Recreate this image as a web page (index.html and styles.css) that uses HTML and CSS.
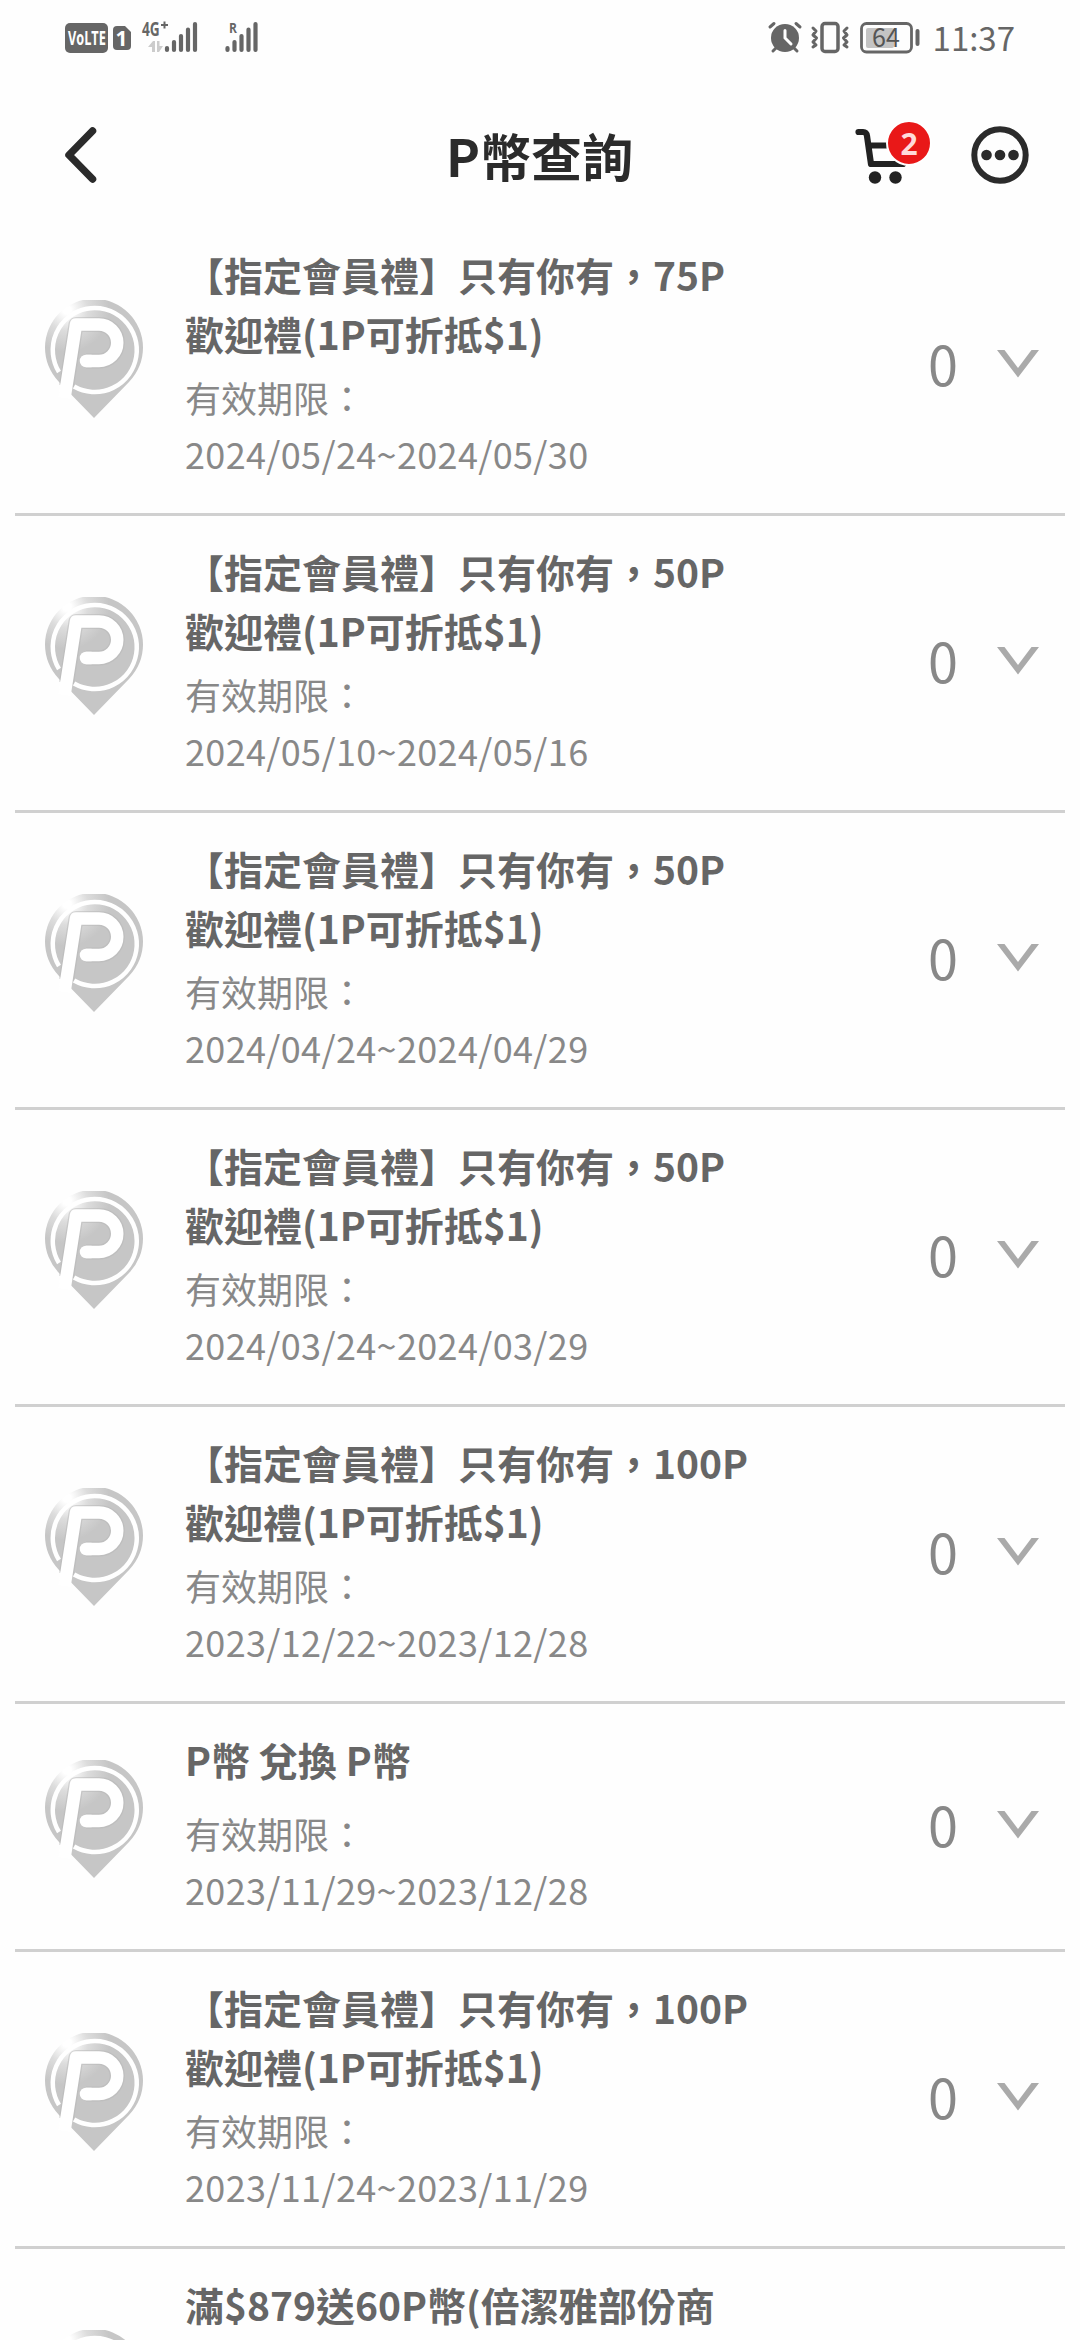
FILE: index.html
```html
<!DOCTYPE html>
<html lang="zh-Hant">
<head>
    <meta charset="UTF-8">
    <meta name="viewport" content="width=device-width, initial-scale=1.0">
    <title>P幣查詢</title>
    <link rel="stylesheet" href="styles.css">
</head>
<body>
    <!-- shared icons -->
    <svg class="sprite" width="0" height="0">
        <defs>
            <radialGradient id="pin-fill" gradientUnits="userSpaceOnUse" cx="22" cy="10" r="42">
                <stop offset="0.1" stop-color="#fff"/>
                <stop offset="0.5" stop-color="#dcdcdc"/>
                <stop offset="1" stop-color="#c6c6c6"/>
            </radialGradient>
        </defs>
        <symbol id="icon-pin" viewBox="0 0 100 119">
            <path d="M49 118 L14 82 A49 49 0 1 1 84 82 Z" fill="url(#pin-fill)"/>
            <path d="M14 72 A42 42 0 1 1 29 86.500" fill="none" stroke="#fff" stroke-width="4.500"/>
            <g fill="none" stroke-linejoin="round">
                <path d="M21.500 86 L31 24.500 H54 A18 18 0 0 1 54 61 H41" stroke="#b6b6b6" stroke-width="15" opacity="0.5"/>
                <path d="M19.500 98 L31 24.500 H54 A18 18 0 0 1 54 61 H41" stroke="#fff" stroke-width="12.500"/>
                <path d="M46 61 H41" stroke="#fff" stroke-width="12.500" stroke-linecap="round"/>
            </g>
        </symbol>
        <symbol id="icon-down" viewBox="0 0 42 28">
            <path d="M0 0 H7.500 L21 18 L34.500 0 H42 L21 27.500 Z" fill="#aaa"/>
        </symbol>
    </svg>

    <div class="status-bar">
        <div class="status-left">
            <svg width="43" height="30" viewBox="0 0 43 30">
                <rect width="43" height="30" rx="5" fill="#666"/>
                <text transform="translate(3 22) scale(0.67 1)" class="volte-text">VoLTE</text>
            </svg>
            <svg class="sim" width="18" height="24" viewBox="0 0 18 24">
                <path d="M4 0 H12 L18 6 V20 Q18 24 14 24 H4 Q0 24 0 20 V4 Q0 0 4 0 Z" fill="#666"/>
                <text x="8.500" y="19.500" text-anchor="middle" class="sim-text">1</text>
            </svg>
            <svg class="signal" width="56" height="32" viewBox="0 0 56 32">
                <text transform="translate(0 13.500) scale(0.72 1)" class="net-text">4G</text>
                <path d="M19 3 H26 M22.500 -0.500 V6.500" stroke="#666" stroke-width="2"/>
                <path d="M6 25 L11 19 H13 V30 H10 V25 Z M15 19 H17.500 V24 H21 L17 30 H15 Z" fill="#ccc"/>
                <path d="M25 26 V28 M32 20 V28 M39 14 V28 M46 7.500 V28 M53 2 V28" stroke="#666" stroke-width="4.200" stroke-linecap="round"/>
            </svg>
            <svg class="signal-roam" width="34" height="32" viewBox="0 0 34 32">
                <text transform="translate(4 11) scale(0.8 1)" class="roam-text">R</text>
                <path d="M2.500 26 V28 M9.500 20 V28 M16.500 14 V28 M23.500 7.500 V28 M30.500 2 V28" stroke="#666" stroke-width="4.200" stroke-linecap="round"/>
            </svg>
        </div>
        <div class="status-right">
            <svg width="34" height="32" viewBox="0 0 34 32">
                <circle cx="17" cy="16" r="14" fill="#666"/>
                <path d="M2 5 L6 1.500 M28 1.500 L32 5 M5 29 L9 25 M25 25 L29 29" stroke="#666" stroke-width="3" stroke-linecap="round"/>
                <path d="M17 8.500 V16 L23 22" fill="none" stroke="#fff" stroke-width="3" stroke-linecap="round"/>
            </svg>
            <svg class="vibrate" width="38" height="32" viewBox="0 0 38 32">
                <rect x="11" y="1.500" width="16" height="28" rx="3" fill="none" stroke="#666" stroke-width="3.500"/>
                <path d="M2 6 L5 9 L2 13 L5.500 16 L2 20 L5 23 L2 25 M36 6 L33 9 L36 13 L32.500 16 L36 20 L33 23 L36 25" fill="none" stroke="#666" stroke-width="3" stroke-linecap="round" stroke-linejoin="round"/>
            </svg>
            <svg class="battery" width="60" height="32" viewBox="0 0 60 32">
                <rect x="1.500" y="1.500" width="50" height="28.500" rx="5" fill="none" stroke="#666" stroke-width="2.800"/>
                <rect x="6" y="6" width="28" height="20" rx="2" fill="#c4c4c4"/>
                <text x="26" y="25" text-anchor="middle" class="battery-text">64</text>
                <path d="M57.500 9 V22" stroke="#666" stroke-width="4" stroke-linecap="round"/>
            </svg>
            <span class="clock">11:37</span>
        </div>
    </div>

    <div class="header">
        <div class="header-left">
            <svg width="32" height="56" viewBox="0 0 32 56">
                <path d="M27.500 4 L4 28 L27.500 52" fill="none" stroke="#2b2b2b" stroke-width="7.500" stroke-linecap="round" stroke-linejoin="round"/>
            </svg>
        </div>
        <h1>P幣查詢</h1>
        <div class="header-right">
            <div class="cart">
                <svg width="76" height="58" viewBox="0 0 76 58">
                    <path d="M3.500 6 H8 Q11.500 6 12 10 L16 38 H48 M14 19.500 H44" fill="none" stroke="#222" stroke-width="6.200" stroke-linecap="round" stroke-linejoin="round"/>
                    <circle cx="20" cy="51.500" r="6.200" fill="#222"/>
                    <circle cx="40.500" cy="51.500" r="6.200" fill="#222"/>
                </svg>
                <span class="badge">2</span>
            </div>
            <svg width="58" height="58" viewBox="0 0 58 58">
                <circle cx="29" cy="29" r="25.700" fill="none" stroke="#2b2b2b" stroke-width="6"/>
                <circle cx="15.500" cy="29" r="5.300" fill="#2b2b2b"/>
                <circle cx="29" cy="29" r="5.300" fill="#2b2b2b"/>
                <circle cx="42.500" cy="29" r="5.300" fill="#2b2b2b"/>
            </svg>
        </div>
    </div>

    <ul class="coin-list">
        <li>
            <svg class="pin"><use href="#icon-pin"/></svg>
            <div class="coin-info">
                <h2>【指定會員禮】只有你有，75P<br>歡迎禮(1P可折抵$1)</h2>
                <p>有效期限：<br><span class="date">2024/05/24~2024/05/30</span></p>
            </div>
            <span class="amount">0</span>
            <svg class="down"><use href="#icon-down"/></svg>
        </li>
        <li>
            <svg class="pin"><use href="#icon-pin"/></svg>
            <div class="coin-info">
                <h2>【指定會員禮】只有你有，50P<br>歡迎禮(1P可折抵$1)</h2>
                <p>有效期限：<br><span class="date">2024/05/10~2024/05/16</span></p>
            </div>
            <span class="amount">0</span>
            <svg class="down"><use href="#icon-down"/></svg>
        </li>
        <li>
            <svg class="pin"><use href="#icon-pin"/></svg>
            <div class="coin-info">
                <h2>【指定會員禮】只有你有，50P<br>歡迎禮(1P可折抵$1)</h2>
                <p>有效期限：<br><span class="date">2024/04/24~2024/04/29</span></p>
            </div>
            <span class="amount">0</span>
            <svg class="down"><use href="#icon-down"/></svg>
        </li>
        <li>
            <svg class="pin"><use href="#icon-pin"/></svg>
            <div class="coin-info">
                <h2>【指定會員禮】只有你有，50P<br>歡迎禮(1P可折抵$1)</h2>
                <p>有效期限：<br><span class="date">2024/03/24~2024/03/29</span></p>
            </div>
            <span class="amount">0</span>
            <svg class="down"><use href="#icon-down"/></svg>
        </li>
        <li>
            <svg class="pin"><use href="#icon-pin"/></svg>
            <div class="coin-info">
                <h2>【指定會員禮】只有你有，100P<br>歡迎禮(1P可折抵$1)</h2>
                <p>有效期限：<br><span class="date">2023/12/22~2023/12/28</span></p>
            </div>
            <span class="amount">0</span>
            <svg class="down"><use href="#icon-down"/></svg>
        </li>
        <li>
            <svg class="pin"><use href="#icon-pin"/></svg>
            <div class="coin-info">
                <h2>P幣 兌換 P幣</h2>
                <p>有效期限：<br><span class="date">2023/11/29~2023/12/28</span></p>
            </div>
            <span class="amount">0</span>
            <svg class="down"><use href="#icon-down"/></svg>
        </li>
        <li>
            <svg class="pin"><use href="#icon-pin"/></svg>
            <div class="coin-info">
                <h2>【指定會員禮】只有你有，100P<br>歡迎禮(1P可折抵$1)</h2>
                <p>有效期限：<br><span class="date">2023/11/24~2023/11/29</span></p>
            </div>
            <span class="amount">0</span>
            <svg class="down"><use href="#icon-down"/></svg>
        </li>
        <li class="cut">
            <svg class="pin"><use href="#icon-pin"/></svg>
            <div class="coin-info">
                <h2>滿$879送60P幣(倍潔雅部份商</h2>
            </div>
        </li>
    </ul>
</body>
</html>
```

FILE: styles.css
```css
* {
    box-sizing: border-box;
}

body {
    margin: 0;
    height: 2340px;
    overflow: hidden;
    background-color: #fefefe;
    font-family: "Noto Sans CJK TC", "Noto Sans", sans-serif;
    text-spacing-trim: space-all;
}

svg {
    display: block;
    flex: none;
    overflow: visible;
}

.sprite {
    position: absolute;
}

/* status bar */
.status-bar {
    display: flex;
    justify-content: space-between;
    height: 76px;
    padding: 0 65px 0 65px;
    color: #666;
}

.status-left,
.status-right {
    display: flex;
    align-items: center;
}

.volte-text {
    fill: #fff;
    font: bold 19px "Open Sans", sans-serif;
}

.sim {
    margin-left: 5px;
}

.sim-text {
    fill: #fff;
    font: bold 21px "Open Sans", sans-serif;
}

.signal {
    margin-left: 11px;
}

.net-text {
    fill: #666;
    font: bold 19px "Open Sans", sans-serif;
}

.signal-roam {
    margin-left: 27px;
}

.roam-text {
    fill: #666;
    font: bold 15px "Open Sans", sans-serif;
}

.vibrate {
    margin-left: 9px;
}

.battery {
    margin-left: 11px;
}

.battery-text {
    fill: #555;
    font: 25px "Noto Sans CJK TC", sans-serif;
}

.clock {
    margin-left: 13px;
    padding-bottom: 3px;
    font-size: 33px;
    line-height: 40px;
}

/* header */
.header {
    display: flex;
    align-items: center;
    height: 143px;
    padding: 15px 51px 0 65px;
    color: #2b2b2b;
}

.header-left {
    width: 173px;
}

.header h1 {
    flex: 1;
    margin: 0;
    padding-right: 14px;
    font-size: 51px;
    line-height: 74px;
    text-align: center;
}

.header-right {
    display: flex;
    justify-content: space-between;
    width: 174px;
}

.cart {
    position: relative;
}

.badge {
    position: absolute;
    top: -6px;
    left: 31px;
    width: 46px;
    height: 46px;
    border: 2px solid #fff;
    border-radius: 50%;
    background-color: #e91818;
    color: #ffdada;
    font: bold 30px/43px "Open Sans", sans-serif;
    text-align: center;
}

/* list */
.coin-list {
    margin: 0 15px;
    padding: 0;
    list-style: none;
}

.coin-list li {
    display: flex;
    align-items: center;
    padding: 26px 26px 32px 30px;
    border-bottom: 3px solid #d0d0d0;
}

.pin {
    width: 100px;
    height: 119px;
    margin-bottom: 8px;
}

.coin-info {
    flex: 1;
    margin-left: 40px;
}

.coin-info h2 {
    min-height: 75px;
    margin: 0;
    padding-bottom: 6px;
    color: #666;
    font-size: 39px;
    line-height: 59px;
    white-space: nowrap;
}

.coin-info p {
    margin: 0;
    color: #888;
    font-size: 36px;
    line-height: 56px;
}

.date {
    letter-spacing: 0.35px;
}

.amount {
    margin-right: 39px;
    color: #888;
    font-size: 54px;
    line-height: 80px;
}

.down {
    width: 42px;
    height: 28px;
    margin-top: 2px;
}

/* last row is only partly in view */
.coin-list li.cut {
    height: 91px;
    padding-bottom: 0;
    border-bottom: none;
    align-items: flex-start;
    overflow: hidden;
}

.cut .pin {
    margin-top: 55px;
}
```
